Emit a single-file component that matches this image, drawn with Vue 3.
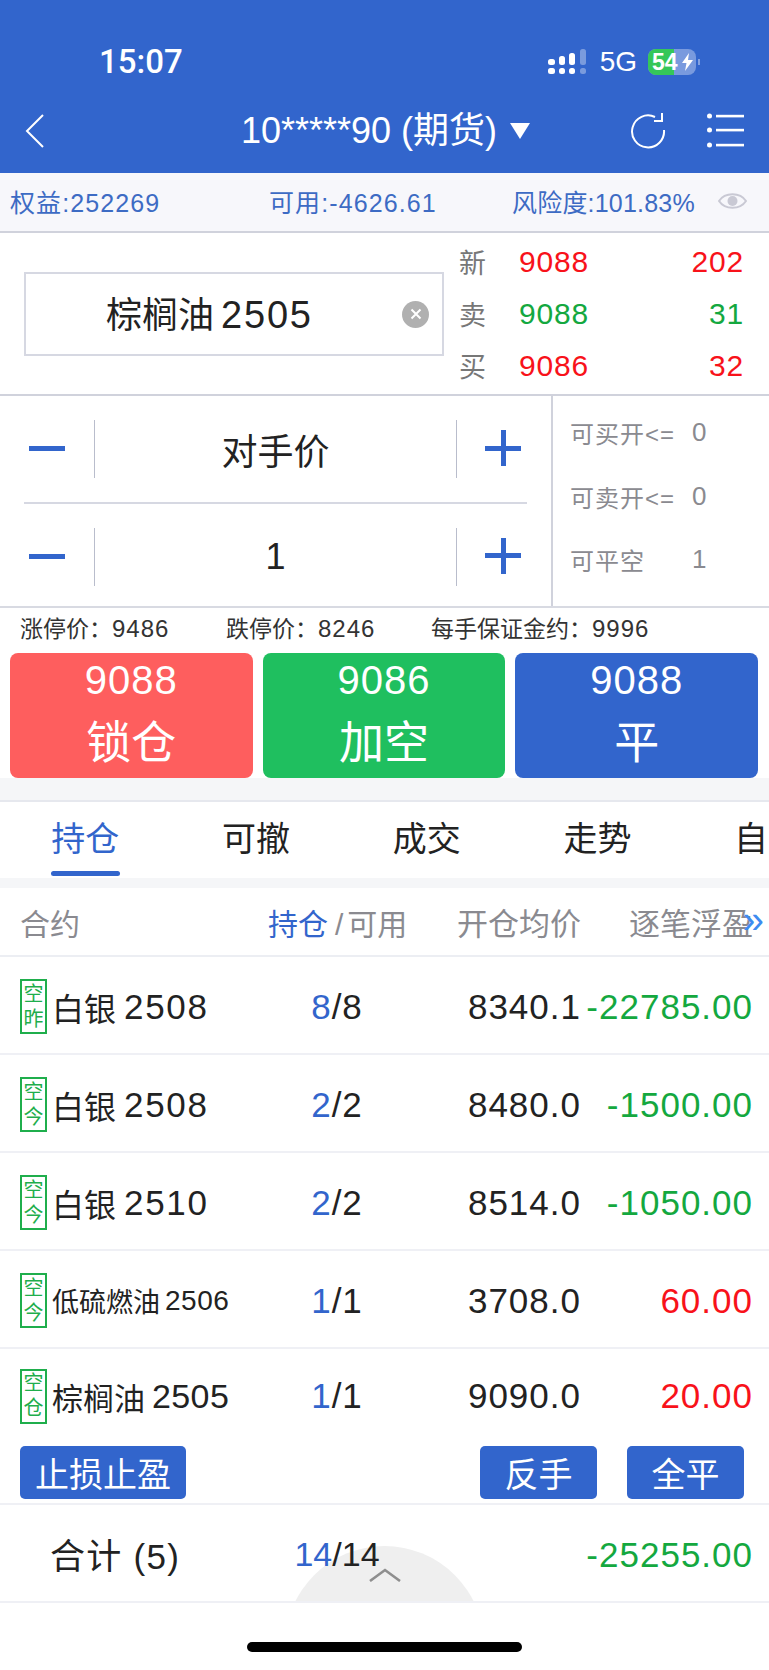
<script setup>
const quotes = [
  { label: '新', price: '9088', qty: '202', color: 'red', qtyColor: 'red' },
  { label: '卖', price: '9088', qty: '31', color: 'green', qtyColor: 'green' },
  { label: '买', price: '9086', qty: '32', color: 'red', qtyColor: 'red' }
]
const steppers = ['对手价', '1']
const available = [
  { label: '可买开<=', value: '0' },
  { label: '可卖开<=', value: '0' },
  { label: '可平空', value: '1' }
]
const limits = [
  { label: '涨停价：', value: '9486', cls: 'limit-a' },
  { label: '跌停价：', value: '8246', cls: 'limit-b' },
  { label: '每手保证金约：', value: '9996', cls: '' }
]
const actions = [
  { price: '9088', label: '锁仓', cls: 'act-red' },
  { price: '9086', label: '加空', cls: 'act-green' },
  { price: '9088', label: '平', cls: 'act-blue' }
]
const tabs = ['持仓', '可撤', '成交', '走势', '自选']
const positions = [
  { tag: ['空', '昨'], name: '白银', code: '2508', size: 'lg', held: '8', free: '8', avg: '8340.1', pnl: '-22785.00', tone: 'green' },
  { tag: ['空', '今'], name: '白银', code: '2508', size: 'lg', held: '2', free: '2', avg: '8480.0', pnl: '-1500.00', tone: 'green' },
  { tag: ['空', '今'], name: '白银', code: '2510', size: 'lg', held: '2', free: '2', avg: '8514.0', pnl: '-1050.00', tone: 'green' },
  { tag: ['空', '今'], name: '低硫燃油', code: '2506', size: 'sm', held: '1', free: '1', avg: '3708.0', pnl: '60.00', tone: 'red' },
  { tag: ['空', '仓'], name: '棕榈油', code: '2505', size: 'md', held: '1', free: '1', avg: '9090.0', pnl: '20.00', tone: 'red' }
]
</script>

<template>
  <div class="page">
    <header class="top">
      <div class="status">
        <span class="time">15:07</span>
        <div class="status-right">
          <svg class="signal" width="38" height="26" viewBox="0 0 38 26">
            <g fill="#fff">
              <rect x="0" y="10" width="7" height="6" rx="2.5" />
              <rect x="0" y="19" width="7" height="6" rx="2.5" />
              <rect x="11" y="7" width="6" height="9" rx="2.5" />
              <rect x="11" y="19" width="6" height="6" rx="2.5" />
              <rect x="21" y="4" width="6" height="12" rx="2.5" />
              <rect x="21" y="19" width="6" height="6" rx="2.5" />
            </g>
            <g fill="#fff" opacity="0.35">
              <rect x="32" y="0" width="6" height="16" rx="2.5" />
              <rect x="32" y="19" width="6" height="6" rx="2.5" />
            </g>
          </svg>
          <span class="net">5G</span>
          <div class="battery">
            <div class="battery-fill"></div>
            <span class="battery-num">54</span>
            <svg class="bolt" width="11" height="18" viewBox="0 0 11 18">
              <path d="M7 0 L0 10 H4.5 L3 18 L11 7 H6 Z" fill="#fff" />
            </svg>
          </div>
          <div class="battery-cap"></div>
        </div>
      </div>
      <div class="nav">
        <svg class="back" width="20" height="34" viewBox="0 0 20 34">
          <polyline points="18,1 2,17 18,33" fill="none" stroke="#fff" stroke-width="2" />
        </svg>
        <div class="title">
          <span class="title-text">10*****90 (期货)</span>
          <svg width="20" height="16" viewBox="0 0 20 16"><path d="M0 0 H20 L10 16 Z" fill="#fff" /></svg>
        </div>
        <svg class="reload" width="36" height="36" viewBox="0 0 36 36">
          <path d="M24 4 A16 16 0 1 0 33 17" fill="none" stroke="#fff" stroke-width="2" />
          <polyline points="23,8 31,8 31,0" fill="none" stroke="#fff" stroke-width="2" />
        </svg>
        <svg class="menu" width="38" height="36" viewBox="0 0 38 36">
          <g fill="#fff">
            <circle cx="2.5" cy="3" r="2.5" /><rect x="9" y="1.8" width="28" height="2.6" />
            <circle cx="2.5" cy="17" r="2.5" /><rect x="9" y="15.8" width="28" height="2.6" />
            <circle cx="2.5" cy="32" r="2.5" /><rect x="9" y="30.8" width="28" height="2.6" />
          </g>
        </svg>
      </div>
    </header>

    <div class="funds">
      <span class="fund-a">权益:252269</span>
      <span class="fund-b">可用:-4626.61</span>
      <span class="fund-c">风险度:101.83%</span>
      <svg class="eye" width="29" height="20" viewBox="0 0 29 20">
        <path d="M1 10 C7 1 22 1 28 10 C22 19 7 19 1 10 Z" fill="none" stroke="#c9c9d4" stroke-width="2" />
        <circle cx="14.5" cy="10" r="5" fill="#c9c9d4" />
      </svg>
    </div>

    <section class="contract">
      <div class="search">
        <span class="search-text">棕榈油<span class="search-code">2505</span></span>
        <span class="clear">
          <svg width="12" height="12" viewBox="0 0 12 12"><path d="M1.5 1.5 L10.5 10.5 M10.5 1.5 L1.5 10.5" stroke="#fff" stroke-width="2" /></svg>
        </span>
      </div>
      <div class="quotes">
        <div v-for="q in quotes" :key="q.label" class="quote">
          <span class="quote-label">{{ q.label }}</span>
          <span class="quote-price" :class="q.color">{{ q.price }}</span>
          <span class="quote-qty" :class="q.qtyColor">{{ q.qty }}</span>
        </div>
      </div>
    </section>

    <section class="order">
      <div class="steppers">
        <div v-for="(s, i) in steppers" :key="s" class="stepper" :class="{ first: i === 0 }">
          <div class="step-btn"><span class="minus"></span></div>
          <div class="step-value">{{ s }}</div>
          <div class="step-btn"><span class="plus"></span></div>
        </div>
      </div>
      <div class="avail">
        <div v-for="a in available" :key="a.label" class="avail-row">
          <span class="avail-label">{{ a.label }}</span>
          <span class="avail-num">{{ a.value }}</span>
        </div>
      </div>
    </section>

    <div class="limits">
      <span v-for="l in limits" :key="l.label" :class="l.cls">{{ l.label }}<span class="limit-num">{{ l.value }}</span></span>
    </div>

    <div class="actions">
      <div v-for="a in actions" :key="a.cls" class="action" :class="a.cls">
        <div class="action-price">{{ a.price }}</div>
        <div class="action-label">{{ a.label }}</div>
      </div>
    </div>

    <div class="tabs-wrap">
      <nav class="tabs">
        <div v-for="(t, i) in tabs" :key="t" class="tab" :class="{ active: i === 0 }">{{ t }}</div>
      </nav>
    </div>

    <div class="list-head">
      <span>合约</span>
      <span class="head-pos"><b>持仓</b><i>/</i>可用</span>
      <span class="num">开仓均价</span>
      <span class="num">逐笔浮盈</span>
      <span class="more">»</span>
    </div>

    <div v-for="p in positions" :key="p.name + p.tag[1]" class="row" :class="{ 'row-last': p.code === '2505' }">
      <div class="name-cell" :class="p.size">
        <span class="tag"><span>{{ p.tag[0] }}</span><span>{{ p.tag[1] }}</span></span>
        <span class="name">{{ p.name }}</span>
        <span class="code">{{ p.code }}</span>
      </div>
      <div class="pos"><span class="held">{{ p.held }}</span>/{{ p.free }}</div>
      <div class="num">{{ p.avg }}</div>
      <div class="num" :class="p.tone">{{ p.pnl }}</div>
    </div>

    <div class="btn-row">
      <button class="mini wide">止损止盈</button>
      <div class="btn-right">
        <button class="mini">反手</button>
        <button class="mini">全平</button>
      </div>
    </div>

    <div class="total">
      <span class="dome"></span>
      <svg class="dome-arrow" width="32" height="14" viewBox="0 0 32 14">
        <polyline points="1,13 16,2 31,13" fill="none" stroke="#8e8e8e" stroke-width="2.6" />
      </svg>
      <span class="total-label">合计 (5)</span>
      <div class="pos total-pos"><span class="held">14</span>/14</div>
      <div></div>
      <div class="num green">-25255.00</div>
    </div>

    <div class="home"><span class="home-bar"></span></div>
  </div>
</template>

<style>
html, body {
  margin: 0;
  background: #fff;
}
</style>

<style scoped>
.page {
  position: relative;
  width: 769px;
  height: 1670px;
  overflow: hidden;
  background: #fff;
  color: #222;
  font-family: "Liberation Sans", "Noto Sans CJK SC", sans-serif;
}

.top {
  height: 173px;
  background: #3265cc;
  color: #fff;
  box-sizing: border-box;
}

.status {
  height: 103px;
  display: flex;
  justify-content: space-between;
  align-items: center;
  padding: 20px 69px 0 99px;
  box-sizing: border-box;
}

.time {
  font-family: Roboto, sans-serif;
  font-size: 33px;
  font-weight: 500;
}

.status-right {
  display: flex;
  align-items: center;
}

.net {
  font-size: 28px;
  margin: 0 11px 0 14px;
}

.battery {
  position: relative;
  width: 48px;
  height: 26px;
  border-radius: 8px;
  background: rgba(255, 255, 255, 0.35);
  overflow: hidden;
}

.battery-fill {
  position: absolute;
  left: 0;
  top: 0;
  bottom: 0;
  width: 26px;
  background: #35c759;
}

.battery-num {
  position: absolute;
  left: 4px;
  top: 1px;
  font-size: 23px;
  line-height: 25px;
  font-weight: 700;
}

.bolt {
  position: absolute;
  right: 3px;
  top: 4px;
}

.battery-cap {
  width: 2px;
  height: 6px;
  margin-left: 2px;
  background: rgba(255, 255, 255, 0.4);
}

.nav {
  height: 70px;
  display: flex;
  align-items: center;
  padding: 0 24px 14px 25px;
  box-sizing: border-box;
}

.back {
  flex: none;
}

.title {
  width: 545px;
  display: flex;
  justify-content: center;
  align-items: center;
  gap: 13px;
  font-size: 36px;
  padding-left: 137px;
  box-sizing: border-box;
}

.title-text {
  padding-bottom: 8px;
  white-space: nowrap;
}

.reload {
  flex: none;
  margin-left: 42px;
}

.menu {
  flex: none;
  margin-left: 40px;
}

.funds {
  height: 60px;
  background: #f7f7fb;
  border-bottom: 2px solid #d0d2dc;
  box-sizing: border-box;
  display: flex;
  align-items: center;
  padding: 0 0 2px 10px;
  font-size: 25px;
  color: #3d6bc4;
}

.fund-a {
  width: 259px;
  letter-spacing: 1.1px;
}

.fund-b {
  width: 243px;
  letter-spacing: 1.1px;
}

.fund-c {
  width: 206px;
  letter-spacing: 0.2px;
  white-space: nowrap;
}

.contract {
  height: 163px;
  display: flex;
  align-items: center;
  border-bottom: 2px solid #d0d2dc;
  box-sizing: border-box;
  padding: 0 25px 0 24px;
}

.search {
  width: 420px;
  height: 84px;
  border: 2px solid #d6d8e2;
  box-sizing: border-box;
  position: relative;
  display: flex;
  align-items: center;
  padding: 0 0 4px 80px;
  font-size: 36px;
}

.search-code {
  font-size: 38px;
  letter-spacing: 1.8px;
  margin-left: 7px;
}

.clear {
  position: absolute;
  right: 13px;
  top: 27px;
  width: 27px;
  height: 27px;
  border-radius: 50%;
  background: #b0b0b0;
  display: flex;
  align-items: center;
  justify-content: center;
}

.quotes {
  flex: 1;
  margin-left: 15px;
  display: flex;
  flex-direction: column;
}

.quote {
  height: 52px;
  display: flex;
  align-items: center;
  font-size: 30px;
  letter-spacing: 0.8px;
}

.quote-label {
  width: 60px;
  font-size: 27px;
  letter-spacing: 0;
  color: #777;
}

.quote-price {
  width: 100px;
}

.quote-qty {
  flex: 1;
  text-align: right;
}

.red {
  color: #f8121a;
}

.green {
  color: #14a83f;
}

.order {
  height: 212px;
  display: flex;
  border-bottom: 2px solid #d8dae2;
  box-sizing: border-box;
}

.steppers {
  width: 553px;
  padding: 0 24px;
  box-sizing: border-box;
  border-right: 2px solid #d0d2dc;
}

.stepper {
  height: 105px;
  display: flex;
  align-items: center;
}

.stepper.first {
  height: 106px;
  border-bottom: 2px solid #d6d8e2;
}

.step-btn {
  width: 71px;
  height: 58px;
  flex: none;
  position: relative;
  box-sizing: border-box;
}

.stepper .step-btn:first-child {
  border-right: 1px solid #b9bdcc;
}

.stepper .step-btn:last-child {
  border-left: 1px solid #b9bdcc;
}

.minus {
  position: absolute;
  left: 5px;
  top: 26px;
  width: 36px;
  height: 5px;
  background: #3265cc;
}

.plus {
  position: absolute;
  left: 28px;
  top: 10px;
  width: 36px;
  height: 36px;
  background:
    linear-gradient(#3265cc, #3265cc) center / 36px 5px no-repeat,
    linear-gradient(#3265cc, #3265cc) center / 5px 36px no-repeat;
}

.step-value {
  flex: 1;
  text-align: center;
  font-size: 36px;
}

.avail {
  flex: 1;
  padding: 5px 0 0 17px;
  font-size: 24px;
  color: #8a8a90;
}

.avail-row {
  height: 63.5px;
  display: flex;
  align-items: center;
  letter-spacing: 1px;
}

.avail-label {
  width: 122px;
  white-space: nowrap;
}

.avail-num {
  font-size: 26px;
}

.limits {
  height: 45px;
  display: flex;
  align-items: center;
  padding: 0 0 8px 20px;
  box-sizing: border-box;
  font-size: 23px;
  color: #333;
}

.limit-num {
  font-size: 24px;
  letter-spacing: 1px;
}

.limit-a {
  width: 206px;
}

.limit-b {
  width: 205px;
}

.actions {
  display: flex;
  gap: 10px;
  padding: 0 11px 0 10px;
  height: 125px;
}

.action {
  flex: 1;
  border-radius: 8px;
  color: #fff;
  text-align: center;
}

.action-price {
  font-size: 40px;
  line-height: 54px;
  letter-spacing: 1px;
}

.action-label {
  font-size: 45px;
  line-height: 74px;
}

.act-red {
  background: #fe5e5e;
}

.act-green {
  background: #1fbf5f;
}

.act-blue {
  background: #3265cc;
}

.tabs-wrap {
  background: #f5f6f8;
  padding: 22px 0 10px;
}

.tabs {
  height: 78px;
  display: flex;
  overflow: hidden;
  background: #fff;
  border-top: 2px solid #e6e8ee;
  box-sizing: border-box;
}

.tab {
  flex: none;
  width: 170.7px;
  text-align: center;
  font-size: 34px;
  line-height: 74px;
  position: relative;
}

.tab.active {
  color: #3265cc;
}

.tab.active::after {
  content: "";
  position: absolute;
  left: 51px;
  bottom: 2px;
  width: 69px;
  height: 5px;
  border-radius: 3px;
  background: #3265cc;
}

.list-head,
.row,
.total {
  display: grid;
  grid-template-columns: 248px 138px 175px 172px;
  padding-left: 20px;
  align-items: center;
}

.list-head {
  height: 69px;
  border-bottom: 2px solid #eceef3;
  box-sizing: border-box;
  font-size: 30px;
  color: #8a8a90;
  position: relative;
}

.list-head .num {
  font-size: 31px;
}

.head-pos {
  white-space: nowrap;
}

.head-pos b {
  font-weight: 400;
  color: #3265cc;
}

.head-pos i {
  font-style: normal;
  margin: 0 4px 0 7px;
}

.more {
  position: absolute;
  right: 5px;
  top: 11px;
  font-size: 38px;
  color: #3d8bf0;
}

.num {
  text-align: right;
}

.row {
  height: 98px;
  padding-top: 3px;
  border-bottom: 2px solid #eff0f5;
  box-sizing: border-box;
  font-size: 35px;
  letter-spacing: 1px;
}

.row:nth-of-type(n) {
  align-content: center;
}

.row-last {
  height: 91px;
  border-bottom: none;
}

.name-cell {
  display: flex;
  align-items: center;
  white-space: nowrap;
  letter-spacing: 0;
}

.tag {
  width: 27px;
  height: 55px;
  border: 2px solid #1fae4c;
  box-sizing: border-box;
  display: flex;
  flex-direction: column;
  align-items: center;
  justify-content: center;
  color: #1fae4c;
  font-size: 20px;
  line-height: 25px;
  margin-right: 5px;
}

.lg .name {
  font-size: 32px;
  margin-right: 8px;
}

.lg .code {
  font-size: 35px;
  letter-spacing: 1.7px;
}

.md .name {
  font-size: 31px;
  margin-right: 7px;
}

.md .code {
  font-size: 34px;
  letter-spacing: 0.4px;
}

.sm .name {
  font-size: 27px;
  margin-right: 5px;
}

.sm .code {
  font-size: 28px;
  letter-spacing: 0.5px;
}

.pos {
  text-align: center;
}

.held {
  color: #3265cc;
}

.btn-row {
  height: 65px;
  padding: 6px 25px 0 20px;
  box-sizing: border-box;
  display: flex;
  justify-content: space-between;
  border-bottom: 2px solid #eff0f5;
}

.btn-right {
  display: flex;
  gap: 30px;
}

.mini {
  width: 117px;
  height: 53px;
  padding: 0;
  border: none;
  border-radius: 5px;
  background: #3265cc;
  color: #fff;
  font-family: inherit;
  font-size: 34px;
}

.mini.wide {
  width: 166px;
}

.total {
  position: relative;
  height: 98px;
  padding-top: 3px;
  border-bottom: 2px solid #eff0f5;
  box-sizing: border-box;
  font-size: 35px;
  letter-spacing: 1px;
  overflow: hidden;
}

.total > * {
  position: relative;
}

.total .dome {
  position: absolute;
  left: 285px;
  top: 41px;
  width: 199px;
  height: 199px;
  border-radius: 50%;
  background: #efefef;
}

.total .dome-arrow {
  position: absolute;
  left: 369px;
  top: 63px;
}

.total-label {
  padding: 0 0 3px 30px;
  letter-spacing: 1.3px;
  white-space: nowrap;
}

.total-pos {
  font-size: 34px;
  letter-spacing: 0;
}

.home {
  height: 67px;
  display: flex;
  justify-content: center;
  padding-top: 39px;
  box-sizing: border-box;
}

.home-bar {
  width: 275px;
  height: 10px;
  border-radius: 5px;
  background: #000;
}
</style>
